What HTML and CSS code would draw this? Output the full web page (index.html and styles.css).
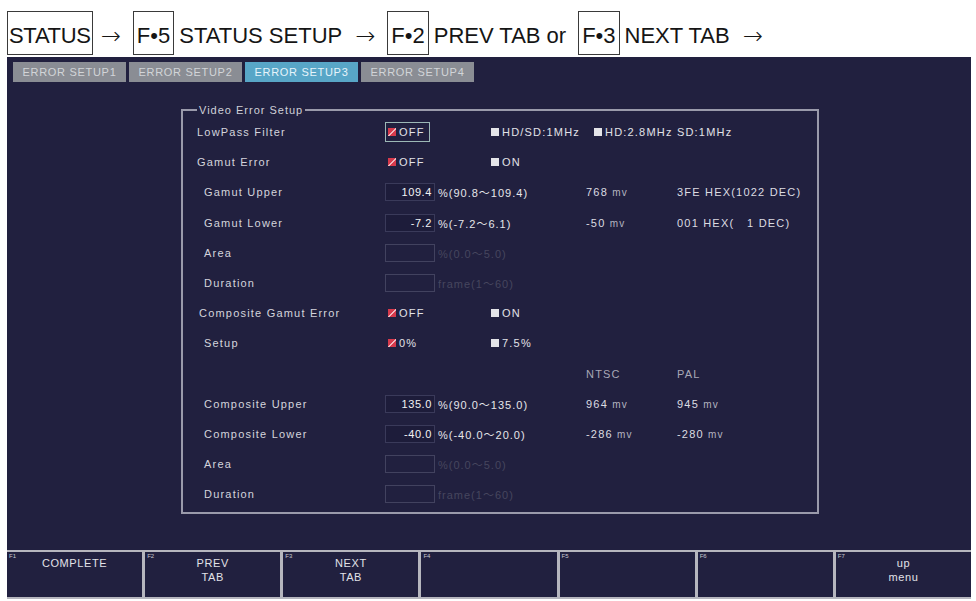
FILE: index.html
```html
<!DOCTYPE html>
<html>
<head>
<meta charset="utf-8">
<link rel="stylesheet" href="styles.css">
</head>
<body>
<div class="crumbs">
  <span class="key wide">STATUS</span><span class="arr">→</span><span class="key">F•5</span><span class="txt">STATUS SETUP</span><span class="arr">→</span><span class="key">F•2</span><span class="txt more">PREV TAB or</span><span class="key">F•3</span><span class="txt">NEXT TAB</span><span class="arr">→</span>
</div>
<div class="screen">
  <div class="tabs">
    <div class="tab">ERROR SETUP1</div>
    <div class="tab">ERROR SETUP2</div>
    <div class="tab on">ERROR SETUP3</div>
    <div class="tab">ERROR SETUP4</div>
  </div>
  <div class="main">
    <fieldset class="group">
      <legend>Video Error Setup</legend>
      <div class="row">
        <div class="lbl">LowPass Filter</div>
        <div><span class="opt cur"><i class="chk sel"></i>OFF</span></div>
        <div><span class="opt"><i class="chk"></i>HD/SD:1MHz</span></div>
        <div class="span2"><span class="opt"><i class="chk"></i>HD:2.8MHz SD:1MHz</span></div>
      </div>
      <div class="row">
        <div class="lbl">Gamut Error</div>
        <div><span class="opt"><i class="chk sel"></i>OFF</span></div>
        <div><span class="opt"><i class="chk"></i>ON</span></div>
      </div>
      <div class="row">
        <div class="lbl ind">Gamut Upper</div>
        <div class="span2"><span class="inp">109.4</span><span class="rng">%(90.8～109.4)</span></div>
        <div class="val">768 <span class="u">mv</span></div>
        <div class="val">3FE HEX(1022 DEC)</div>
      </div>
      <div class="row">
        <div class="lbl ind">Gamut Lower</div>
        <div class="span2"><span class="inp">-7.2</span><span class="rng">%(-7.2～6.1)</span></div>
        <div class="val">-50 <span class="u">mv</span></div>
        <div class="val">001 HEX(   1 DEC)</div>
      </div>
      <div class="row">
        <div class="lbl ind">Area</div>
        <div class="span2"><span class="inp dis"></span><span class="rng dim">%(0.0～5.0)</span></div>
      </div>
      <div class="row">
        <div class="lbl ind">Duration</div>
        <div class="span2"><span class="inp dis"></span><span class="rng dim">frame(1～60)</span></div>
      </div>
      <div class="row">
        <div class="lbl ind2">Composite Gamut Error</div>
        <div><span class="opt"><i class="chk sel"></i>OFF</span></div>
        <div><span class="opt"><i class="chk"></i>ON</span></div>
      </div>
      <div class="row">
        <div class="lbl ind">Setup</div>
        <div><span class="opt"><i class="chk sel"></i>0%</span></div>
        <div><span class="opt"><i class="chk"></i>7.5%</span></div>
      </div>
      <div class="row">
        <div class="lbl"></div>
        <div></div>
        <div></div>
        <div class="hdr">NTSC</div>
        <div class="hdr">PAL</div>
      </div>
      <div class="row">
        <div class="lbl ind">Composite Upper</div>
        <div class="span2"><span class="inp">135.0</span><span class="rng">%(90.0～135.0)</span></div>
        <div class="val">964 <span class="u">mv</span></div>
        <div class="val">945 <span class="u">mv</span></div>
      </div>
      <div class="row">
        <div class="lbl ind">Composite Lower</div>
        <div class="span2"><span class="inp">-40.0</span><span class="rng">%(-40.0～20.0)</span></div>
        <div class="val">-286 <span class="u">mv</span></div>
        <div class="val">-280 <span class="u">mv</span></div>
      </div>
      <div class="row">
        <div class="lbl ind">Area</div>
        <div class="span2"><span class="inp dis"></span><span class="rng dim">%(0.0～5.0)</span></div>
      </div>
      <div class="row">
        <div class="lbl ind">Duration</div>
        <div class="span2"><span class="inp dis"></span><span class="rng dim">frame(1～60)</span></div>
      </div>
    </fieldset>
  </div>
  <div class="fbar">
    <div class="fkey"><span class="fnum">F1</span>COMPLETE</div>
    <div class="fkey"><span class="fnum">F2</span>PREV<br>TAB</div>
    <div class="fkey"><span class="fnum">F3</span>NEXT<br>TAB</div>
    <div class="fkey"><span class="fnum">F4</span></div>
    <div class="fkey"><span class="fnum">F5</span></div>
    <div class="fkey"><span class="fnum">F6</span></div>
    <div class="fkey"><span class="fnum">F7</span>up<br>menu</div>
  </div>
</div>
</body>
</html>
```
FILE: styles.css
```css
* { box-sizing: border-box; }
html, body { margin: 0; padding: 0; background: #ffffff; }
body {
  width: 976px;
  height: 601px;
  overflow: hidden;
  font-family: "Liberation Sans", Arial, "Noto Sans CJK JP", sans-serif;
}

/* breadcrumb header */
.crumbs {
  display: flex;
  height: 57px;
  padding: 11px 0 0 7px;
  font-size: 22px;
  color: #151515;
}
.crumbs span {
  border: 1px solid transparent;
  height: 44px;
  padding: 6px 0 0;
  line-height: 36px;
  white-space: pre;
}
.crumbs .key { border-color: #3a3a3a; padding: 6px 3px 0 3px; }
.crumbs .key.wide { padding: 6px 1px 0 1px; letter-spacing: -0.3px; }
.crumbs .arr {
  padding: 6px 11px 0 7px;
  font-family: "DejaVu Sans", sans-serif;
  font-size: 24px;
  font-weight: 300;
}
.crumbs .txt { padding: 6px 4px 0 4px; }
.crumbs .txt.more { padding-right: 11px; }

/* device screen */
.screen {
  margin-left: 7px;
  width: 964px;
  height: 542px;
  background: #21203f;
  display: flex;
  flex-direction: column;
  color: #d6d6de;
  font-size: 11px;
  letter-spacing: 1.2px;
}
.tabs {
  display: flex;
  gap: 3px;
  margin: 5px 0 0 6px;
  height: 20px;
}
.tab {
  width: 113px;
  background: #8a8d94;
  color: #d2d5d8;
  font-size: 11px;
  letter-spacing: 0.7px;
  display: flex;
  align-items: center;
  justify-content: center;
}
.tab.on { background: #58a6c7; color: #e6f4fb; }

.main {
  flex: 1;
  padding: 22px 0 0 174px;
}
.group {
  margin: 0;
  width: 638px;
  border: 2px solid #9a9aab;
  padding: 1px 0 3px 14px;
  min-inline-size: 0;
}
.group legend {
  padding: 0 2px;
  font-size: 11px;
  line-height: 12px;
  letter-spacing: 1px;
  color: #d0d0d8;
}
.row {
  display: grid;
  grid-template-columns: 188px 103px 98px 91px 1fr;
  height: 30.2px;
  align-items: center;
  white-space: pre;
}
.lbl { color: #d4d4dc; }
.lbl.ind { padding-left: 7px; }
.lbl.ind2 { padding-left: 2px; }

.opt {
  display: inline-flex;
  align-items: center;
  gap: 3px;
  padding: 2px 4px 2px 2px;
  border: 1px solid transparent;
  line-height: 14px;
  color: #e2e2e8;
}
.opt.cur { border-color: #9cb8b6; }
.span2 { grid-column: span 2; display: flex; align-items: center; }
.row .span2:nth-child(4) { padding-left: 5px; }

.chk {
  display: inline-block;
  width: 8px;
  height: 8px;
  background: #e4e4e8;
}
.chk.sel {
  background: linear-gradient(135deg, #d63a4c 0 45%, #f2b8c0 45% 60%, #d63a4c 60%);
}

.inp {
  display: inline-block;
  width: 50px;
  height: 18px;
  border-width: 1px;
  border-style: solid;
  border-color: #3a3a5a;
  background-color: #1d1c3a;
  text-align: right;
  padding-right: 2px;
  line-height: 16px;
  color: #f2f2f4;
  letter-spacing: 0.6px;
}
.inp.dis { border-color: #42425f; background-color: transparent; }
.rng { margin-left: 3px; color: #e6e6ea; letter-spacing: 1px; }
.rng.dim { color: #46465e; }
.val { color: #dcdce2; }
.val .u { font-size: 10px; color: #b4b4c0; }
.hdr { color: #a8a8b6; }

/* function key bar */
.fbar {
  display: flex;
  gap: 3px;
  height: 49px;
  padding: 2px 0;
  background: #b6b6be;
}
.fkey {
  flex: 1;
  position: relative;
  background: #21203f;
  text-align: center;
  padding-top: 4px;
  font-size: 11px;
  line-height: 14px;
  letter-spacing: 0.6px;
  color: #e2e2e8;
}
.fnum {
  position: absolute;
  left: 2px;
  top: 1px;
  font-size: 6px;
  line-height: 6px;
  letter-spacing: 0;
  color: #c8c8d0;
}
```
